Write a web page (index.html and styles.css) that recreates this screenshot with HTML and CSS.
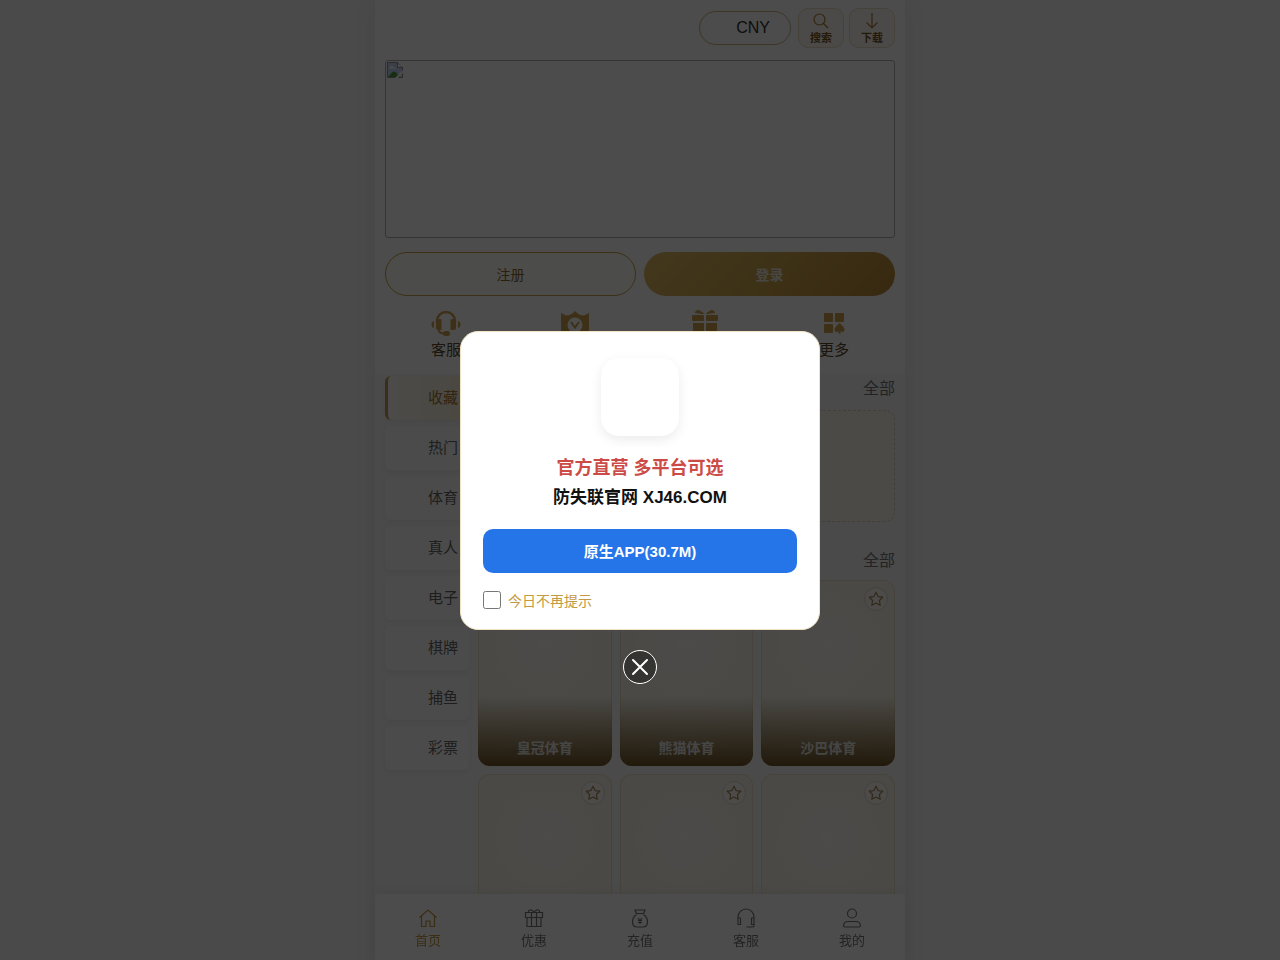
FILE: index.html
```html
<!DOCTYPE html>
<html lang="zh-CN">

<head>
  <meta charset="UTF-8">
  <meta name="viewport" content="width=device-width, initial-scale=1.0">
  <title>首页</title>
  <link rel="stylesheet" href="styles.css">
</head>

<body>

  <svg class="sprite" aria-hidden="true">
    <symbol id="star" viewBox="0 0 16 16">
      <path d="M8 1.2l2.1 4.4 4.7.6-3.4 3.3.8 4.8L8 12l-4.2 2.3.8-4.8L1.2 6.2l4.7-.6z" fill="none" stroke="currentColor" stroke-width="1.2" stroke-linejoin="round"/>
    </symbol>
  </svg>

  <div class="app">
    <div class="top">
      <header class="header">
        <button type="button" class="currency">CNY</button>
        <button type="button" class="tool">
          <svg viewBox="0 0 16 16" width="16" height="16"><circle cx="6.5" cy="6.5" r="5.5" /><path d="M10.500 10.500l4.500 4.500" /></svg>
          搜索
        </button>
        <button type="button" class="tool">
          <svg viewBox="0 0 16 16" width="16" height="16"><path d="M8 0v15M2.5 9.5L8 15l5.500-5.500" /></svg>
          下载
        </button>
      </header>

      <div class="banner">
        <svg viewBox="0 0 16 16" width="16" height="16">
          <path d="M.5.5h10l5 5v10H.5z" fill="#c3d4f4" stroke="#8f8f8f"/>
          <path d="M10.500.500v5h5" fill="#fff" stroke="#8f8f8f"/>
          <path d="M2.500 6.500a2 2 0 0 1 4-1 1.500 1.500 0 0 1 2 1z" fill="#fff"/>
          <path d="M1 15l4-4.500q2-2 4 0L13 15z" fill="#4f9e3a"/>
          <path d="M8 16l8-8v3l-5 5z" fill="#fff"/>
        </svg>
      </div>

      <div class="auth">
        <button type="button" class="btn-register">注册</button>
        <button type="button" class="btn-login">登录</button>
      </div>

      <nav class="quick">
        <a href="#">
          <svg viewBox="0 0 30 28" width="30" height="28">
            <path d="M6 13V12a9 9 0 0 1 18 0v1" fill="none" stroke="currentColor" stroke-width="2.500"/>
            <path d="M5 11q5-2 5.500 0v10H7q-2 0-2-2zM25 11q-5-2-5.500 0v10H23q2 0 2-2z"/>
            <path d="M3 12v7q-2.500-.500-2.500-3.500T3 12zM27 12v7q2.500-.500 2.500-3.500T27 12z"/>
            <path d="M7.500 20q0 4.500 6 4.500" fill="none" stroke="currentColor" stroke-width="2"/>
            <rect x="12" y="22" width="7" height="5" rx="2.500"/>
          </svg>
          <span>客服</span>
        </a>
        <a href="#">
          <svg viewBox="0 0 30 28" width="30" height="28">
            <path d="M1 4l5 2.500q5 0 9-4.500 4 4.500 9 4.500L29 4v18q-6 5-14 6Q7 27 1 22z"/>
            <circle cx="15" cy="16" r="7.500" fill="#fff"/>
            <path d="M11 13l4 5.500 4-5.500" fill="none" stroke="currentColor" stroke-width="2"/>
          </svg>
          <span>贵宾</span>
        </a>
        <a href="#">
          <svg viewBox="0 0 30 28" width="30" height="28">
            <path d="M5 3.500L8 1l5.500 3.500zM25 3.500L22 1l-5.500 3.500z" stroke="currentColor"/>
            <rect x="2" y="6" width="12" height="6" rx="1"/>
            <rect x="16" y="6" width="12" height="6" rx="1"/>
            <path d="M3 14h11v13H3zM16 14h11v13H16z"/>
          </svg>
          <span>活动</span>
        </a>
        <a href="#">
          <svg viewBox="0 0 30 28" width="30" height="28">
            <rect x="5" y="4" width="9" height="9" rx="1"/>
            <rect x="16" y="4" width="9" height="9" rx="1"/>
            <rect x="5" y="15" width="9" height="9" rx="1"/>
            <path d="M20.500 14q5 4 5 6.500 0 2.500-2.500 2.500-1 0-2-1l1 2.500h-3l1-2.500q-1 1-2 1-2.500 0-2.500-2.500 0-2.500 5-6.500z"/>
          </svg>
          <span>更多</span>
        </a>
      </nav>
    </div>

    <main class="main">
      <nav class="side">
        <a href="#" class="active">收藏</a>
        <a href="#">热门</a>
        <a href="#">体育</a>
        <a href="#">真人</a>
        <a href="#">电子</a>
        <a href="#">棋牌</a>
        <a href="#">捕鱼</a>
        <a href="#">彩票</a>
      </nav>

      <div class="content">
        <section class="section">
          <div class="section-head"><a href="#">全部</a></div>
          <div class="empty"></div>
        </section>

        <section class="section">
          <div class="section-head"><a href="#">全部</a></div>
          <div class="games">
            <article class="game">
              <button type="button" class="fav" aria-label="收藏"><svg width="16" height="16"><use href="#star"/></svg></button>
              <h3>皇冠体育</h3>
            </article>
            <article class="game">
              <button type="button" class="fav" aria-label="收藏"><svg width="16" height="16"><use href="#star"/></svg></button>
              <h3>熊猫体育</h3>
            </article>
            <article class="game">
              <button type="button" class="fav" aria-label="收藏"><svg width="16" height="16"><use href="#star"/></svg></button>
              <h3>沙巴体育</h3>
            </article>
            <article class="game">
              <button type="button" class="fav" aria-label="收藏"><svg width="16" height="16"><use href="#star"/></svg></button>
            </article>
            <article class="game">
              <button type="button" class="fav" aria-label="收藏"><svg width="16" height="16"><use href="#star"/></svg></button>
            </article>
            <article class="game">
              <button type="button" class="fav" aria-label="收藏"><svg width="16" height="16"><use href="#star"/></svg></button>
            </article>
          </div>
        </section>
      </div>
    </main>
  </div>

  <nav class="tabbar">
    <a href="#" class="active">
      <svg viewBox="0 0 20 20" width="20" height="20"><path d="M1.500 9.500L10 2l8.500 7.500M3.500 8v10.500h4.500v-5.500h4v5.500h4.500V8"/></svg>
      首页
    </a>
    <a href="#">
      <svg viewBox="0 0 20 20" width="20" height="20"><path d="M1.500 4.500h17v5h-17zM3 9.500h14v9H3zM7.500 4.500v14M12.500 4.500v14M10 4.500Q8.500 1.500 6 2T5 4.500M10 4.500q1.500-3 4-2.500t1 2.500"/></svg>
      优惠
    </a>
    <a href="#">
      <svg viewBox="0 0 20 20" width="20" height="20"><path d="M6.500 5.500L5 2h10l-1.500 3.500zM6.500 6.500Q2.500 9 2.500 14q0 5 4.500 5h6q4.500 0 4.500-5 0-5-4-7.500M8 10l2 2.500 2-2.500M10 12.500V16M8 12.500h4M8 14.500h4"/></svg>
      充值
    </a>
    <a href="#">
      <svg viewBox="0 0 20 20" width="20" height="20"><path d="M2 16V9a8 8 0 0 1 16 0v7M2 10h2.500v6.500H2zM15.500 10H18v6.500h-2.500zM18 16v2q0 1-1.500 1H10.500"/></svg>
      客服
    </a>
    <a href="#">
      <svg viewBox="0 0 20 20" width="20" height="20"><circle cx="10" cy="5.500" r="4.500"/><path d="M6 13.500h8q4 0 4.500 4 0 1.500-1.500 1.500H3q-1.500 0-1.500-1.500 .500-4 4.500-4z"/></svg>
      我的
    </a>
  </nav>

  <!-- Popup -->
  <div class="overlay">
    <div class="modal" role="dialog" aria-modal="true">
      <div class="modal-logo"></div>
      <p class="modal-title">官方直营 多平台可选</p>
      <p class="modal-site">防失联官网 XJ46.COM</p>
      <button type="button" class="modal-btn">原生APP(30.7M)</button>
      <div class="modal-check">
        <input type="checkbox" id="noTip">
        <label for="noTip">今日不再提示</label>
      </div>
      <button type="button" class="modal-close" aria-label="关闭">
        <svg viewBox="0 0 18 18" width="18" height="18"><path d="M2 2l14 14M16 2L2 16"/></svg>
      </button>
    </div>
  </div>

  <script>
    const overlay = document.querySelector('.overlay');

    document.querySelector('.modal-close').addEventListener('click', function () {
      overlay.style.display = 'none';
    });
  </script>

</body>

</html>
```
FILE: styles.css
```css
* {
  box-sizing: border-box;
}

body {
  margin: 0;
  height: 100vh;
  overflow: hidden;
  background: #f8f8f8;
  font-family: "Liberation Sans", "Noto Sans CJK SC", sans-serif;
  color: #333;
}

a {
  color: inherit;
  text-decoration: none;
}

button {
  font-family: inherit;
  padding: 0;
  cursor: pointer;
}

.sprite {
  display: none;
}

.app {
  max-width: 532px;
  min-height: 100vh;
  margin: 0 auto;
  border: 1px solid #f2f2f2;
  border-top: none;
  background: #f7f7f7;
  box-shadow: 0 0 28px rgba(0, 0, 0, 0.08);
}

/* Header */
.top {
  background: #fff;
  padding: 8px 10px 13px;
}

.header {
  display: flex;
  justify-content: flex-end;
  align-items: center;
  gap: 5px;
}

.currency {
  width: 92px;
  height: 34px;
  margin-right: 2px;
  padding-right: 20px;
  text-align: right;
  font-size: 16px;
  color: #333;
  background: #fff;
  border: 1px solid #cdb27c;
  border-radius: 17px;
}

.tool {
  display: flex;
  flex-direction: column;
  align-items: center;
  justify-content: center;
  gap: 2px;
  width: 46px;
  height: 40px;
  padding-top: 2px;
  font-size: 11px;
  line-height: 14px;
  font-weight: bold;
  color: #7a551c;
  background: #fcf8f0;
  border: 1px solid #ecdcbf;
  border-radius: 10px;
}

.tool svg {
  fill: none;
  stroke: #a87a34;
  stroke-width: 1.2;
}

.banner {
  height: 178px;
  margin-top: 12px;
  padding: 1px;
  border: 1px solid #b0b0b0;
  border-radius: 3px;
}

.auth {
  display: grid;
  grid-template-columns: 1fr 1fr;
  gap: 8px;
  margin-top: 14px;
}

.btn-register,
.btn-login {
  height: 44px;
  border-radius: 22px;
  font-size: 14px;
}

.btn-register {
  color: #8e6824;
  background: #fffdf8;
  border: 1px solid #c9a24a;
}

.btn-login {
  color: #f0ece2;
  font-weight: bold;
  background: linear-gradient(135deg, #e0bd62, #b88a35);
  border: none;
}

.quick {
  display: flex;
  justify-content: space-between;
  margin-top: 13px;
  padding: 0 46px;
}

.quick a {
  display: flex;
  flex-direction: column;
  align-items: center;
  gap: 2px;
  font-size: 15px;
  line-height: 22px;
  color: #5c4827;
}

.quick svg {
  fill: currentColor;
  color: #cba24c;
}

/* Categories and games */
.main {
  display: flex;
  gap: 9px;
  padding: 2px 10px 66px;
}

.side {
  flex: 0 0 84px;
  display: flex;
  flex-direction: column;
  gap: 6px;
}

.side a {
  height: 44px;
  padding-right: 11px;
  line-height: 44px;
  text-align: right;
  font-size: 15px;
  color: #666;
  background: #fcfcfc;
  border-radius: 6px;
  box-shadow: 0 2px 4px rgba(0, 0, 0, 0.05);
}

.side a.active {
  color: #a87a34;
  background: linear-gradient(90deg, #fdfbf5, #faf0d8);
  border-left: 3px solid #c49d4c;
}

.content {
  flex: 1;
}

.section {
  margin-bottom: 26px;
}

.section-head {
  display: flex;
  justify-content: flex-end;
  height: 34px;
  font-size: 16px;
  line-height: 26px;
  color: #777;
}

.empty {
  height: 112px;
  background: #faf7ef;
  border: 1px dashed #ddd3bd;
  border-radius: 10px;
}

.games {
  display: grid;
  grid-template-columns: repeat(3, 1fr);
  gap: 8px;
}

.section-head + .games {
  margin-top: -2px;
}

.game {
  position: relative;
  display: flex;
  align-items: flex-end;
  height: 186px;
  overflow: hidden;
  background: radial-gradient(circle at 50% 35%, #fcfaf5, #f7f0dc);
  border-radius: 12px;
  box-shadow: inset 0 0 0 1px #ece2c8;
}

.game h3 {
  flex: 1;
  margin: 0;
  padding: 42px 0 8px;
  font-size: 14px;
  line-height: 20px;
  text-align: center;
  color: #e8e6e2;
  background: linear-gradient(180deg, rgba(110, 88, 48, 0), #6e5427);
}

.fav {
  position: absolute;
  top: 7px;
  right: 7px;
  display: flex;
  align-items: center;
  justify-content: center;
  width: 24px;
  height: 24px;
  color: #a88a58;
  background: #fdfcf8;
  border: 1px solid #e3d9c2;
  border-radius: 50%;
}

/* Bottom tabs */
.tabbar {
  position: fixed;
  left: 0;
  right: 0;
  bottom: 0;
  display: flex;
  max-width: 530px;
  height: 66px;
  margin: 0 auto;
  background: #fff;
  box-shadow: 0 -2px 10px rgba(0, 0, 0, 0.06);
}

.tabbar a {
  flex: 1;
  display: flex;
  flex-direction: column;
  align-items: center;
  gap: 3px;
  padding-top: 14px;
  font-size: 13px;
  line-height: 20px;
  color: #777;
}

.tabbar a.active {
  color: #c39a42;
}

.tabbar svg {
  fill: none;
  stroke: currentColor;
  stroke-width: 1.2;
}

/* Popup */
.overlay {
  position: fixed;
  inset: 0;
  display: flex;
  align-items: center;
  justify-content: center;
  background: rgba(0, 0, 0, 0.7);
}

.modal {
  position: relative;
  width: 360px;
  padding: 26px 22px 20px;
  text-align: center;
  background: #fff;
  border: 1px solid #efe3c4;
  border-radius: 18px;
}

.modal-logo {
  width: 78px;
  height: 78px;
  margin: 0 auto 17px;
  border-radius: 18px;
  box-shadow: 0 4px 12px rgba(0, 0, 0, 0.08);
}

.modal p {
  margin: 0;
  line-height: 30px;
  font-weight: bold;
}

.modal-title {
  font-size: 18px;
  color: #cc4b46;
}

.modal-site {
  font-size: 17px;
  color: #111;
}

.modal-btn {
  display: block;
  width: 100%;
  height: 44px;
  margin: 16px 0 18px;
  font-size: 15px;
  font-weight: bold;
  color: #fff;
  background: #2575e8;
  border: none;
  border-radius: 10px;
}

.modal-check {
  display: flex;
  align-items: center;
  gap: 7px;
  height: 18px;
  font-size: 14px;
  color: #c39a42;
}

.modal-check input {
  width: 18px;
  height: 18px;
  margin: 0;
}

.modal-close {
  position: absolute;
  top: calc(100% + 21px);
  left: calc(50% - 17px);
  display: flex;
  align-items: center;
  justify-content: center;
  width: 34px;
  height: 34px;
  background: rgba(0, 0, 0, 0.3);
  border: 1px solid #fff;
  border-radius: 50%;
}

.modal-close svg {
  fill: none;
  stroke: #fff;
  stroke-width: 2;
  stroke-linecap: round;
}
```
